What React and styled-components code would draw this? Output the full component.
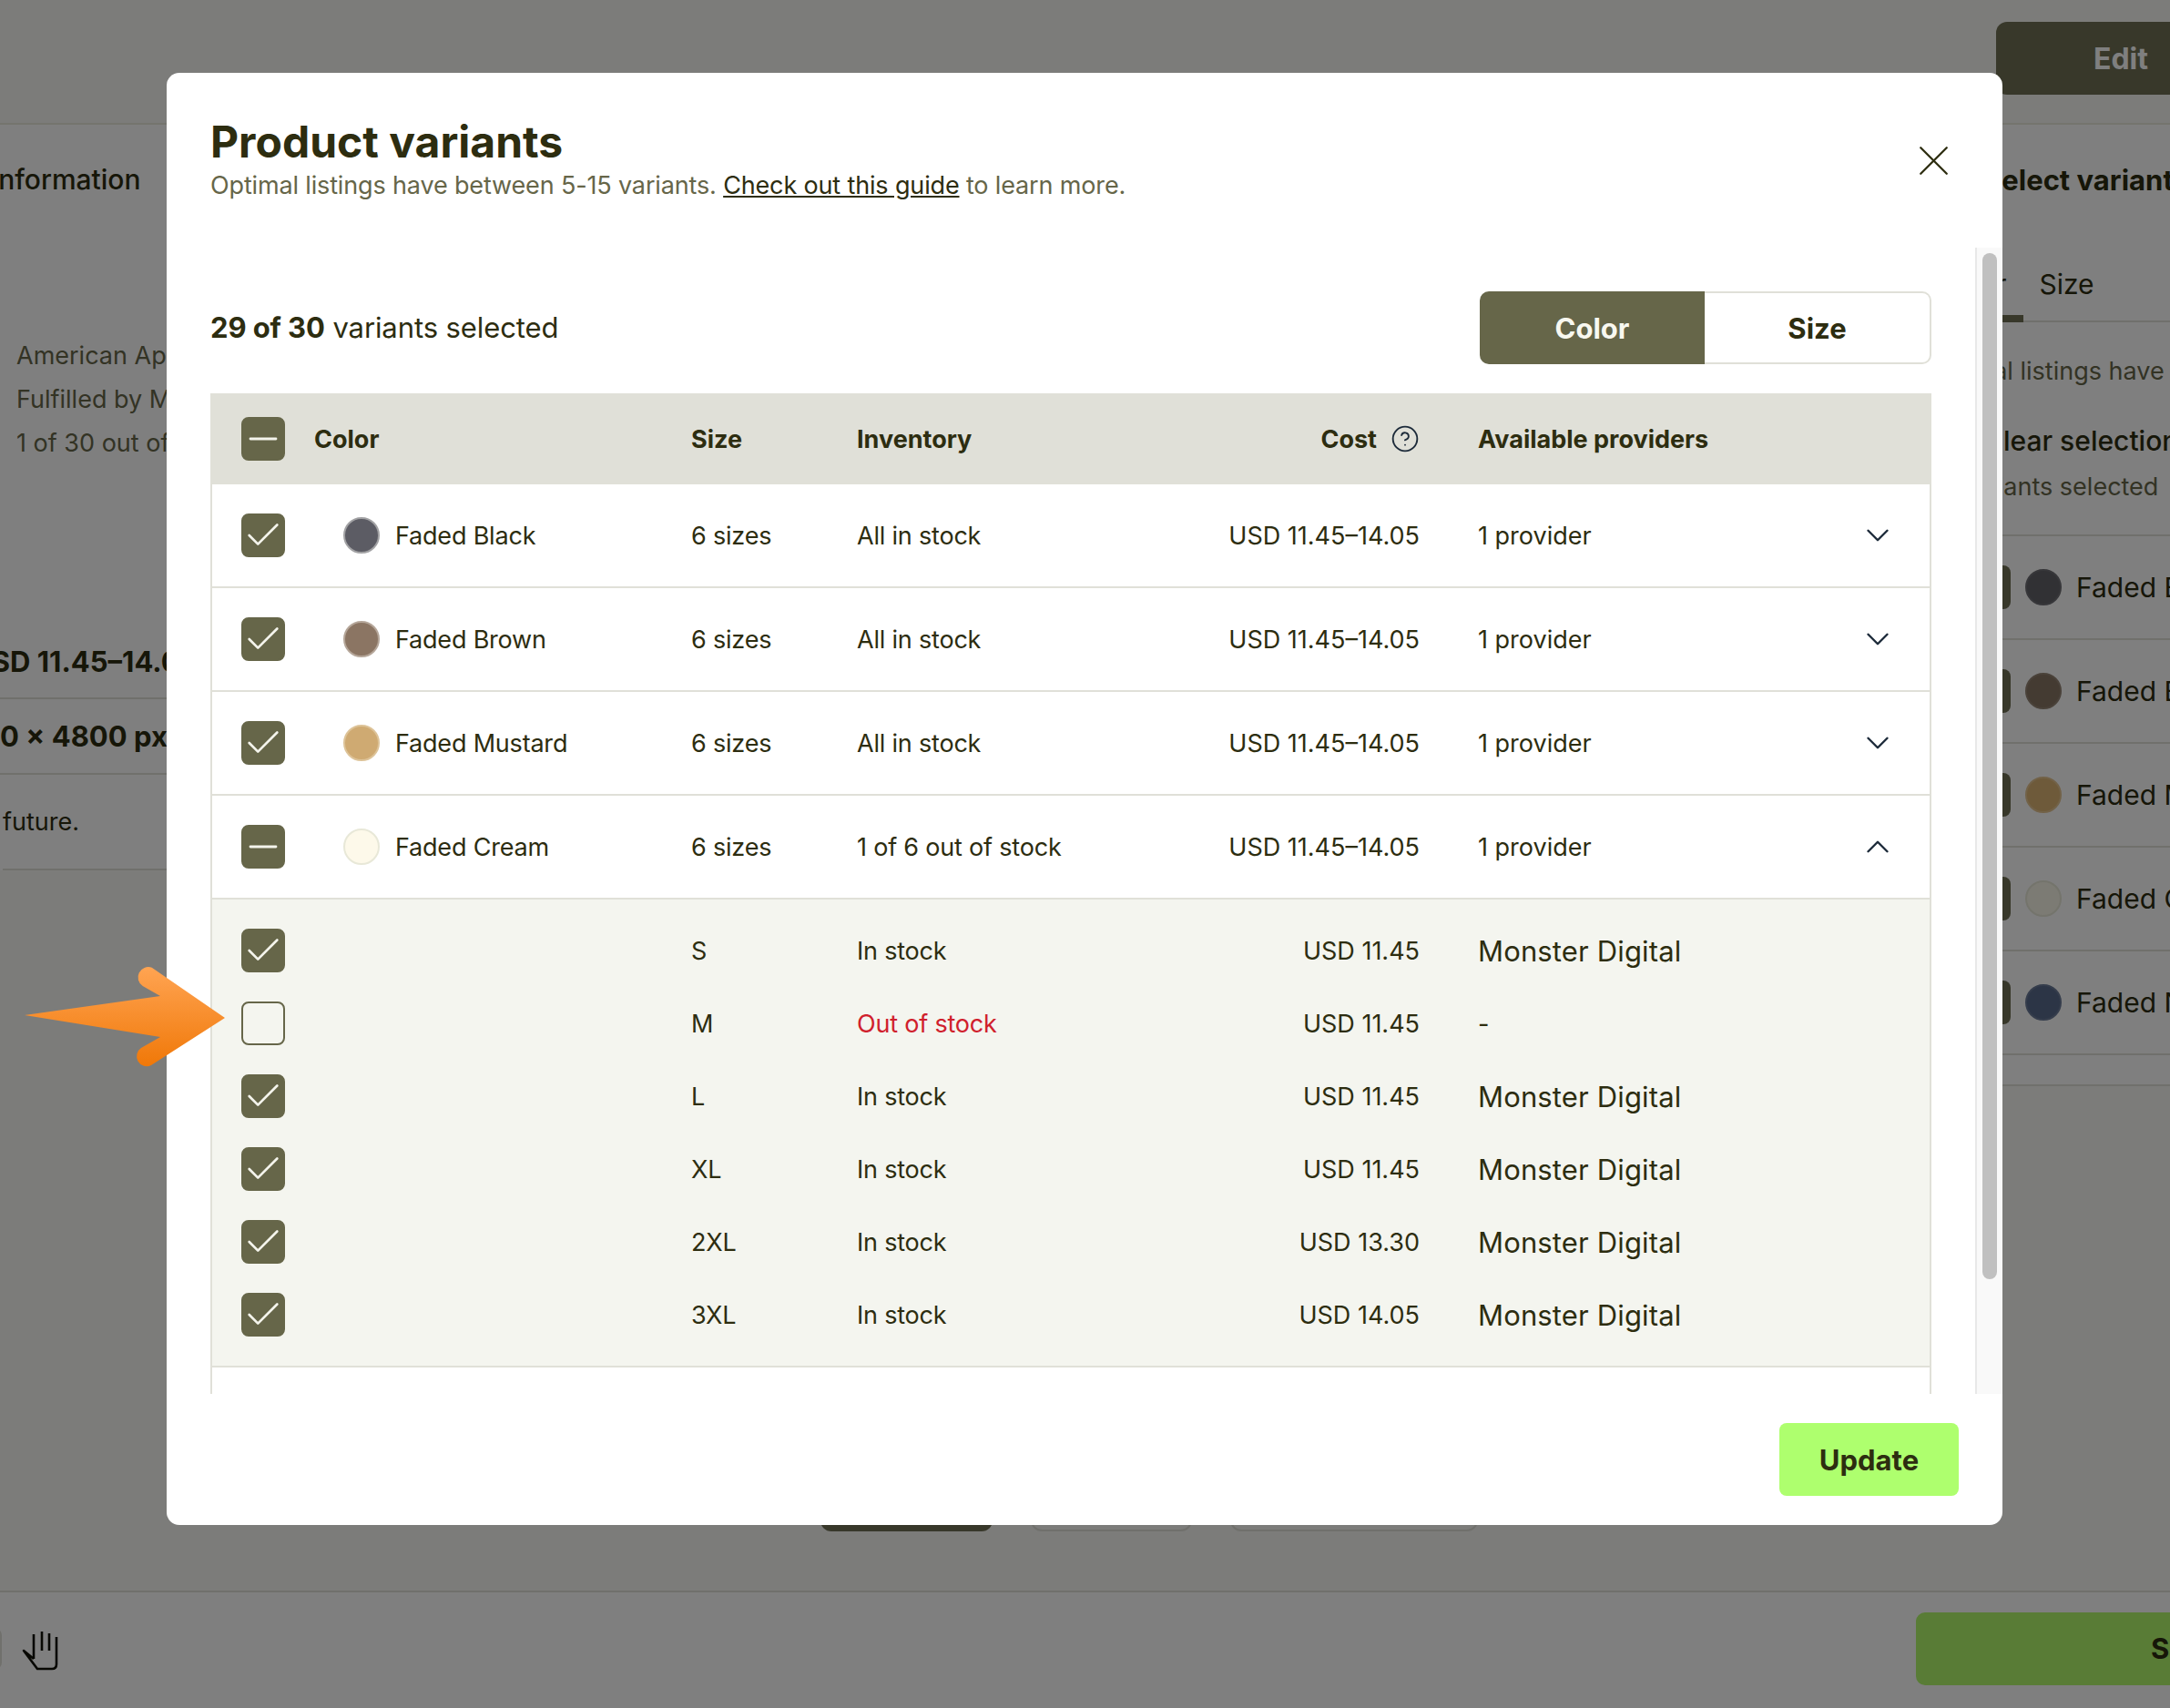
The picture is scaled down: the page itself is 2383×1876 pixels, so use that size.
import React from 'react';
import styled, { createGlobalStyle } from 'styled-components';
import { X, ChevronDown, ChevronUp, Check, Minus, CircleHelp } from 'lucide-react';

const GlobalStyle = createGlobalStyle`
    html, body {
        margin: 0;
        padding: 0;
        background: #f8f8f4;
    }
    * {
        box-sizing: border-box;
    }
`

const font = `Inter, "Liberation Sans", sans-serif`;
const ink = '#2d2d10';
const olive = '#666649';
const line = '#e0e0d8';

const Page = styled.div`
    position: relative;
    display: flex;
    flex-direction: column;
    width: 2383px;
    height: 1876px;
    overflow: hidden;
    background: #f8f8f4;
    color: ${ink};
    font-family: ${font};
    font-size: 27px;
    white-space: nowrap;
`

const Header = styled.div`
    display: flex;
    justify-content: flex-end;
    flex: none;
    height: 137px;
    padding-top: 24px;
    border-bottom: 2px solid #e8e8dc;
`

const EditButton = styled.div`
    display: flex;
    align-items: center;
    justify-content: flex-end;
    width: 191px;
    height: 80px;
    padding-right: 24px;
    border-radius: 12px 0 0 12px;
    background: #707054;
    color: #fff;
    font-size: 32px;
    font-weight: 700;
`

const Main = styled.div`
    display: flex;
    flex: 1;
    min-height: 0;
`

const LeftPanel = styled.div`
    flex: none;
    display: flex;
    flex-direction: column;
    width: 300px;
    height: 819px;
    margin-left: -10px;
    background: #fff;
`

const PanelTitle = styled.div`
    height: 122px;
    padding-top: 42px;
    font-size: 30px;
    font-weight: 500;
`

const MutedLines = styled.div`
    display: flex;
    flex-direction: column;
    gap: 16px;
    height: 440px;
    padding: 116px 0 0 28px;
    color: #666649;
`

const MutedLine = styled.div`
    line-height: 32px;
`

const SpecRow = styled.div`
    display: flex;
    align-items: center;
    flex: none;
    height: ${props => props.$height}px;
    margin-left: ${props => props.$indent}px;
    padding-bottom: ${props => props.$bottom || 0}px;
    border-bottom: 2px solid #e0e0d8;
    font-size: ${props => props.$plain ? 27 : 31}px;
    font-weight: ${props => props.$plain ? 400 : 700};
`

const Center = styled.div`
    flex: 1;
    display: flex;
    align-items: flex-end;
    gap: 42px;
    padding: 0 0 65px 611px;
`

const CenterButton = styled.div`
    flex: none;
    width: ${props => props.$width}px;
    height: 80px;
    border-radius: 12px;
    background: ${props => props.$dark ? '#707054' : 'transparent'};
    border: ${props => props.$dark ? 'none' : '2px solid #e0e0d8'};
`

const RightPanel = styled.div`
    flex: none;
    width: 283px;
    height: 1056px;
    background: #fff;
    border-bottom: 2px solid #e0e0d8;
`

const RightTitle = styled.div`
    height: 122px;
    padding: 42px 0 0 78px;
    font-size: 31px;
    font-weight: 700;
`

const RightTabs = styled.div`
    display: flex;
    gap: 17px;
    align-items: flex-end;
    height: 95px;
    padding-left: 27px;
    border-bottom: 2px solid #e0e0d8;
    font-size: 30px;
`

const RightTab = styled.div`
    height: 60px;
    padding-right: 19px;
    border-bottom: ${props => props.$active ? '8px solid #707054' : 'none'};
    margin-bottom: -2px;
`

const RightNote = styled.div`
    height: ${props => props.$height}px;
    padding-top: ${props => props.$top}px;
    padding-left: ${props => props.$left}px;
    color: ${props => props.$muted ? '#666649' : ink};
    font-size: ${props => props.$muted ? 27 : 30}px;
    font-weight: ${props => props.$muted ? 400 : 500};
    border-bottom: ${props => props.$ruled ? '2px solid #e0e0d8' : 'none'};
`

const RightRow = styled.div`
    display: flex;
    align-items: center;
    height: 114px;
    border-bottom: 2px solid #e0e0d8;
`

const RightCheck = styled.div`
    flex: none;
    width: 48px;
    height: 48px;
    margin-left: 60px;
    border-radius: 8px;
    background: #707054;
`

const RightSwatch = styled.div`
    flex: none;
    width: 40px;
    height: 40px;
    margin-left: 16px;
    border-radius: 50%;
    background: ${props => props.$color};
    border: 2px solid ${props => props.$edge};
`

const RightName = styled.div`
    margin-left: 16px;
    font-size: 30px;
`

const Footer = styled.div`
    display: flex;
    align-items: center;
    justify-content: space-between;
    flex: none;
    height: 129px;
    padding-bottom: 4px;
    background: #fff;
    border-top: 2px solid #e0e0d8;
`

const ToolGroup = styled.div`
    display: flex;
    align-items: center;
    gap: 18px;
    margin-left: -46px;
`

const ToolButton = styled.div`
    width: 48px;
    height: 46px;
    border: 2px solid #e0e0d8;
    border-radius: 8px;
`

const HandIcon = styled.svg`
    flex: none;
    color: #101006;
`

const SaveButton = styled.div`
    display: flex;
    align-items: center;
    width: 279px;
    height: 80px;
    padding-left: 258px;
    border-radius: 10px 0 0 10px;
    background: #b2f86c;
    font-size: 31px;
    font-weight: 700;
`

const Overlay = styled.div`
    position: absolute;
    inset: 0;
    background: rgba(0, 0, 0, 0.5);
`

const Modal = styled.div`
    position: absolute;
    left: 183px;
    top: 80px;
    display: flex;
    flex-direction: column;
    width: 2016px;
    height: 1595px;
    overflow: hidden;
    border-radius: 14px;
    background: #fff;
`

const ModalHead = styled.div`
    display: flex;
    align-items: center;
    justify-content: space-between;
    flex: none;
    height: 192px;
    padding: 0 47px 0 48px;
`

const Title = styled.div`
    font-size: 48px;
    font-weight: 700;
    line-height: 50px;
`

const Subtitle = styled.div`
    margin-top: 5px;
    color: #666649;
    line-height: 36px;
    letter-spacing: -0.15px;
`

const GuideLink = styled.a`
    color: ${ink};
    text-decoration: underline;
`

const ScrollArea = styled.div`
    flex: 1;
    display: flex;
    min-height: 0;
`

const ScrollBody = styled.div`
    flex: 1;
    min-width: 0;
    padding: 48px 48px 0 48px;
    overflow: hidden;
`

const Toolbar = styled.div`
    display: flex;
    align-items: center;
    justify-content: space-between;
    height: 80px;
    margin-bottom: 32px;
`

const Count = styled.div`
    margin-top: -2px;
    font-size: 31px;
    letter-spacing: -0.1px;
    strong {
        font-weight: 700;
    }
`

const Toggle = styled.div`
    display: flex;
    width: 496px;
    height: 80px;
`

const ToggleItem = styled.div`
    flex: 1;
    display: flex;
    align-items: center;
    justify-content: center;
    border: ${props => props.$active ? 'none' : `2px solid ${line}`};
    border-left: none;
    border-radius: ${props => props.$active ? '10px 0 0 10px' : '0 10px 10px 0'};
    background: ${props => props.$active ? olive : '#fff'};
    color: ${props => props.$active ? '#f8f8f0' : ink};
    font-size: 31px;
    font-weight: 700;
`

const Table = styled.div`
    border-left: 2px solid ${line};
    border-right: 2px solid ${line};
    min-height: 1100px;
`

const Row = styled.div`
    display: grid;
    grid-template-columns: 80px 414px 182px 300px 318px 1fr auto;
    align-items: center;
    padding: 0 36px 0 32px;
    letter-spacing: -0.2px;
`

const HeadRow = styled(Row)`
    height: 100px;
    margin: 0 -2px;
    padding-left: 34px;
    padding-right: 38px;
    background: ${line};
    font-weight: 700;
    letter-spacing: 0;
`

const VariantRow = styled(Row)`
    height: 114px;
    border-bottom: 2px solid ${line};
`

const SubRow = styled(Row)`
    height: 80px;
`

const SubRows = styled.div`
    padding: 16px 0;
    background: #f4f5ef;
    border-bottom: 2px solid ${line};
`

const Box = styled.div`
    display: flex;
    align-items: center;
    justify-content: center;
    width: 48px;
    height: 48px;
    border-radius: 8px;
    border: 2px solid ${olive};
    background: ${props => props.$empty ? 'transparent' : olive};
    color: #f4f4ec;
    svg {
        flex: none;
    }
`

const ColorCell = styled.div`
    display: flex;
    align-items: center;
    gap: 17px;
    padding-left: 32px;
`

const Swatch = styled.div`
    width: 40px;
    height: 40px;
    border-radius: 50%;
    background: ${props => props.$color};
    border: 2px solid ${props => props.$edge};
`

const Inventory = styled.div`
    color: ${props => props.$out ? '#d0202c' : ink};
`

const Cost = styled.div`
    display: flex;
    align-items: center;
    justify-content: flex-end;
    gap: 15px;
    letter-spacing: 0;
`

const HelpIcon = styled(CircleHelp)`
    color: #1d2b3a;
`

const Provider = styled.div`
    padding-left: 64px;
    font-size: ${props => props.$large ? 31 : 27}px;
    letter-spacing: ${props => props.$large ? '0.15px' : 0};
`

const IconButton = styled.button`
    display: flex;
    padding: 0;
    border: 0;
    background: none;
    color: ${props => props.$color};
`

const ScrollTrack = styled.div`
    flex: none;
    width: 30px;
    padding: 6px 6px 0 6px;
    background: #f9f9f9;
    border-left: 2px solid #e8e8e8;
`

const ScrollThumb = styled.div`
    height: 1127px;
    border-radius: 8px;
    background: #c0c0c0;
`

const ModalFoot = styled.div`
    display: flex;
    justify-content: flex-end;
    align-items: flex-start;
    flex: none;
    height: 144px;
    padding: 32px 48px 0 0;
`

const UpdateButton = styled.button`
    width: 197px;
    height: 80px;
    border: 0;
    border-radius: 8px;
    background: #aeff6e;
    color: ${ink};
    font-family: ${font};
    font-size: 31px;
    font-weight: 700;
`

const Pointer = styled.svg`
    position: absolute;
    left: 20px;
    top: 1050px;
`

const variants = [
    { name: 'Faded Black', color: '#5c5c64', edge: '#a2a2a4', stock: 'All in stock' },
    { name: 'Faded Brown', color: '#8b7563', edge: '#b5a699', stock: 'All in stock' },
    { name: 'Faded Mustard', color: '#cfaa72', edge: '#ddc398', stock: 'All in stock' },
    { name: 'Faded Cream', color: '#fdf9ea', edge: '#e8e8d8', stock: '1 of 6 out of stock', partial: true, open: true },
];

const sizes = [
    { size: 'S', cost: 'USD 11.45' },
    { size: 'M', cost: 'USD 11.45', out: true },
    { size: 'L', cost: 'USD 11.45' },
    { size: 'XL', cost: 'USD 11.45' },
    { size: '2XL', cost: 'USD 13.30' },
    { size: '3XL', cost: 'USD 14.05' },
];

const rightRows = [
    { name: 'Faded Black', color: '#626268', edge: '#6e6e74' },
    { name: 'Faded Brown', color: '#887664', edge: '#948474' },
    { name: 'Faded Mustard', color: '#dcb474', edge: '#e4c490' },
    { name: 'Faded Cream', color: '#f8f6e8', edge: '#e8e8d8' },
    { name: 'Faded Navy', color: '#586a8c', edge: '#6a7a98' },
];

const CheckMark = () => <Check size={46} strokeWidth={1.4} />
const MinusMark = () => <Minus size={48} strokeWidth={1.4} />

const App = () => {
    return <Page>
        <GlobalStyle />
        <Header>
            <EditButton>Edit</EditButton>
        </Header>
        <Main>
            <LeftPanel>
                <PanelTitle>Information</PanelTitle>
                <MutedLines>
                    <MutedLine>American Apparel</MutedLine>
                    <MutedLine>Fulfilled by Monster Digital</MutedLine>
                    <MutedLine>1 of 30 out of stock</MutedLine>
                </MutedLines>
                <SpecRow $height={69} $bottom={12} $indent={-22}>USD 11.45–14.05</SpecRow>
                <SpecRow $height={83} $indent={-52}>4800 × 4800 px</SpecRow>
                <SpecRow $height={105} $indent={13} $plain>future.</SpecRow>
            </LeftPanel>
            <Center>
                <CenterButton $dark $width={189} />
                <CenterButton $width={177} />
                <CenterButton $width={272} />
            </Center>
            <RightPanel>
                <RightTitle>Select variants</RightTitle>
                <RightTabs>
                    <RightTab $active>Color</RightTab>
                    <RightTab>Size</RightTab>
                </RightTabs>
                <RightNote $muted $height={75} $top={37} $left={13}>Optimal listings have between</RightNote>
                <RightNote $height={80} $top={37} $left={78}>Clear selection</RightNote>
                <RightNote $muted $ruled $height={80} $top={9} $left={53}>variants selected</RightNote>
                {rightRows.map(row => <RightRow key={row.name}>
                    <RightCheck />
                    <RightSwatch $color={row.color} $edge={row.edge} />
                    <RightName>{row.name}</RightName>
                </RightRow>)}
            </RightPanel>
        </Main>
        <Footer>
            <ToolGroup>
                <ToolButton />
                <HandIcon width="50" height="50" viewBox="0 0 50 50" fill="none" stroke="currentColor" strokeWidth="2.6" strokeLinejoin="round">
                    <path d="M17 9 V36 M26 6 V27 M34 8 V27" />
                    <path d="M42 12 V42 Q42 47 37 47 H21 L6 27 L17 36" />
                </HandIcon>
            </ToolGroup>
            <SaveButton>Save</SaveButton>
        </Footer>
        <Overlay />
        <Modal>
            <ModalHead>
                <div>
                    <Title>Product variants</Title>
                    <Subtitle>
                        Optimal listings have between 5-15 variants. <GuideLink>Check out this guide</GuideLink> to learn more.
                    </Subtitle>
                </div>
                <IconButton $color={ink}><X size={57} strokeWidth={1} /></IconButton>
            </ModalHead>
            <ScrollArea>
                <ScrollBody>
                    <Toolbar>
                        <Count><strong>29 of 30</strong> variants selected</Count>
                        <Toggle>
                            <ToggleItem $active>Color</ToggleItem>
                            <ToggleItem>Size</ToggleItem>
                        </Toggle>
                    </Toolbar>
                    <Table>
                        <HeadRow>
                            <Box><MinusMark /></Box>
                            <div>Color</div>
                            <div>Size</div>
                            <div>Inventory</div>
                            <Cost>Cost <HelpIcon size={32} strokeWidth={1.4} /></Cost>
                            <Provider>Available providers</Provider>
                            <span />
                        </HeadRow>
                        {variants.map(v => <React.Fragment key={v.name}>
                            <VariantRow>
                                <Box>{v.partial ? <MinusMark /> : <CheckMark />}</Box>
                                <ColorCell>
                                    <Swatch $color={v.color} $edge={v.edge} />
                                    {v.name}
                                </ColorCell>
                                <div>6 sizes</div>
                                <div>{v.stock}</div>
                                <Cost>USD 11.45–14.05</Cost>
                                <Provider>1 provider</Provider>
                                <IconButton $color="#1d2b3a">
                                    {v.open ? <ChevronUp size={42} strokeWidth={1.4} /> : <ChevronDown size={42} strokeWidth={1.4} />}
                                </IconButton>
                            </VariantRow>
                            {v.open && <SubRows>
                                {sizes.map(s => <SubRow key={s.size}>
                                    <Box $empty={s.out}>{!s.out && <CheckMark />}</Box>
                                    <span />
                                    <div>{s.size}</div>
                                    <Inventory $out={s.out}>{s.out ? 'Out of stock' : 'In stock'}</Inventory>
                                    <Cost>{s.cost}</Cost>
                                    <Provider $large={!s.out}>{s.out ? '-' : 'Monster Digital'}</Provider>
                                    <span />
                                </SubRow>)}
                            </SubRows>}
                        </React.Fragment>)}
                    </Table>
                </ScrollBody>
                <ScrollTrack>
                    <ScrollThumb />
                </ScrollTrack>
            </ScrollArea>
            <ModalFoot>
                <UpdateButton>Update</UpdateButton>
            </ModalFoot>
        </Modal>
        <Pointer width="240" height="132" viewBox="0 0 240 132">
            <defs>
                <linearGradient id="pointerFill" x1="0" y1="0" x2="0" y2="1">
                    <stop offset="0" stopColor="#ffa452" />
                    <stop offset="1" stopColor="#f07808" />
                </linearGradient>
            </defs>
            <path fill="url(#pointerFill)" d="M7 65 L156 44 L136.7 33 A11.4 11.4 0 0 1 146.7 12.7 L227 68 L146 120 A11 11 0 0 1 135 101 L156 89 Z" />
        </Pointer>
    </Page>
}

export default App;
